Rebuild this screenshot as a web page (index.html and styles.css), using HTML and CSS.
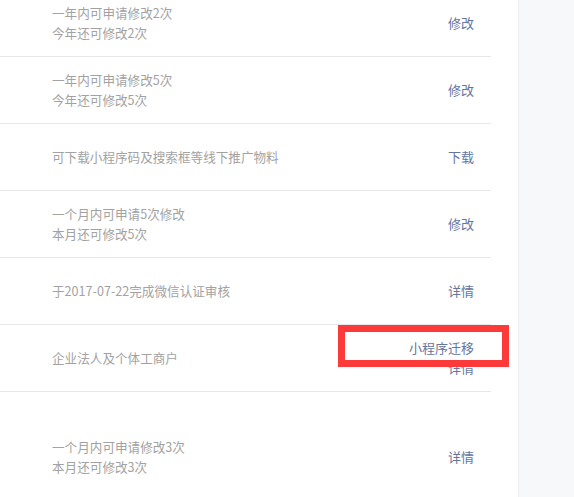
FILE: index.html
```html
<!DOCTYPE html>
<html lang="zh-CN">
<head>
<meta charset="utf-8">
<title>设置</title>
<link rel="stylesheet" href="styles.css">
</head>
<body>
<div class="page">
  <main class="main">
    <div class="list">
      <div class="row">
        <div class="desc"><p>一年内可申请修改2次</p><p>今年还可修改2次</p></div>
        <div class="act"><a>修改</a></div>
      </div>
      <div class="row">
        <div class="desc"><p>一年内可申请修改5次</p><p>今年还可修改5次</p></div>
        <div class="act"><a>修改</a></div>
      </div>
      <div class="row">
        <div class="desc"><p>可下载小程序码及搜索框等线下推广物料</p></div>
        <div class="act"><a>下载</a></div>
      </div>
      <div class="row">
        <div class="desc"><p>一个月内可申请5次修改</p><p>本月还可修改5次</p></div>
        <div class="act"><a>修改</a></div>
      </div>
      <div class="row">
        <div class="desc"><p>于2017-07-22完成微信认证审核</p></div>
        <div class="act"><a>详情</a></div>
      </div>
      <div class="row row-mark">
        <div class="desc"><p>企业法人及个体工商户</p></div>
        <div class="act"><a>小程序迁移</a><a>详情</a></div>
        <div class="mark"></div>
      </div>
      <div class="row row-tall">
        <div class="desc"><p>一个月内可申请修改3次</p><p>本月还可修改3次</p></div>
        <div class="act"><a>详情</a></div>
      </div>
    </div>
  </main>
  <aside class="side"></aside>
</div>
</body>
</html>
```
FILE: styles.css
```css
html, body {
  margin: 0;
  padding: 0;
  background: #ffffff;
  overflow: hidden;
}
body {
  font-family: "Noto Sans CJK SC", "Noto Sans", sans-serif;
  font-size: 13px;
  line-height: 20px;
}
.page {
  display: flex;
  height: 497px;
  overflow: hidden;
}
.main {
  width: 518px;
  flex: none;
  background: #ffffff;
}
.side {
  flex: 1;
  background: #f7f8fa;
  border-left: 1px solid #eef0f3;
}
.list {
  width: 491px;
  margin-top: -10px;
}
.row {
  position: relative;
  display: flex;
  justify-content: space-between;
  align-items: center;
  height: 66px;
  padding: 0 17px 0 52px;
  border-bottom: 1px solid #e7e7eb;
}
.row-tall {
  height: 130px;
}
.desc p {
  margin: 0;
  font-size: 12.6px;
  color: #a2a2a2;
}
.act {
  display: flex;
  flex-direction: column;
  align-items: flex-end;
}
.act a {
  color: #6475a0;
  text-decoration: none;
}
.mark {
  position: absolute;
  top: 0;
  left: 338px;
  width: 157px;
  height: 28px;
  border: 7px solid #fc3a3a;
  background: transparent;
}
```
